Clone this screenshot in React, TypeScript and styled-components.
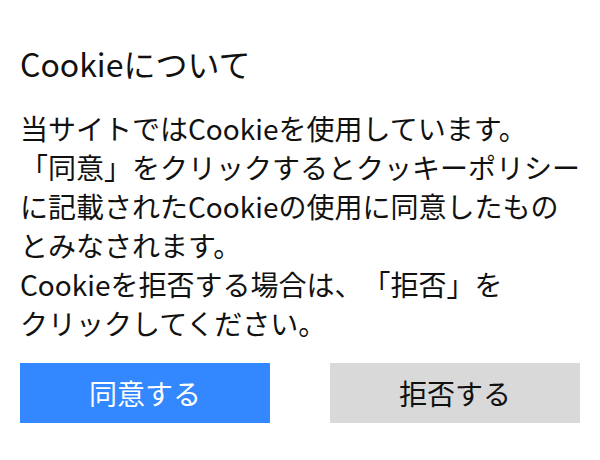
import styled, { createGlobalStyle } from "styled-components";

const GlobalStyle = createGlobalStyle`
  body {
    margin: 0;
    background: #ffffff;
    font-family: "Noto Sans CJK JP", "Noto Sans", sans-serif;
  }
`;

const Banner = styled.section`
  display: flex;
  flex-direction: column;
  width: 600px;
  box-sizing: border-box;
  padding: 41px 20px 0;
  color: #111111;
  text-spacing-trim: space-all;
`;

const Title = styled.h2`
  margin: 0 0 23px;
  font-size: 32px;
  font-weight: 400;
  line-height: 45px;
`;

const Message = styled.p`
  margin: 0 0 20px;
  font-size: 28px;
  line-height: 39px;
  font-weight: 400;
`;

const Actions = styled.div`
  display: flex;
  justify-content: space-between;
`;

const Button = styled.button<{ $primary?: boolean }>`
  width: 250px;
  height: 60px;
  border: none;
  border-radius: 0;
  font-family: inherit;
  font-size: 28px;
  font-weight: 400;
  cursor: pointer;
  background: ${(p) => (p.$primary ? "#3388ff" : "#d9d9d9")};
  color: ${(p) => (p.$primary ? "#ffffff" : "#111111")};
`;

export default function App() {
  return (
    <>
      <GlobalStyle />
      <Banner>
        <Title>Cookieについて</Title>
        <Message>
          当サイトではCookieを使用しています。
          <br />
          「同意」をクリックするとクッキーポリシーに記載されたCookieの使用に同意したものとみなされます。
          <br />
          Cookieを拒否する場合は、「拒否」を
          <br />
          クリックしてください。
        </Message>
        <Actions>
          <Button $primary>同意する</Button>
          <Button>拒否する</Button>
        </Actions>
      </Banner>
    </>
  );
}
